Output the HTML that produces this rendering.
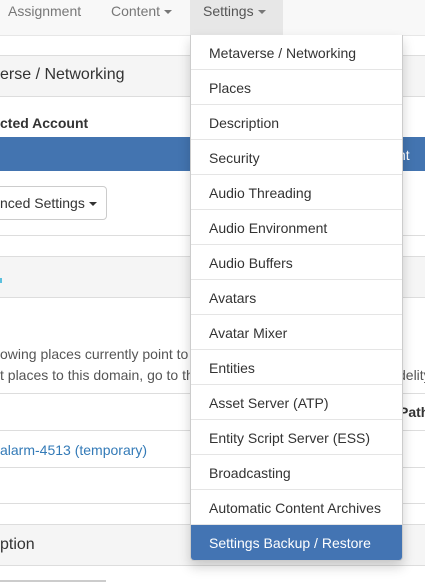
<!DOCTYPE html>
<html><head><style>
*{box-sizing:border-box;margin:0;padding:0}
body{width:425px;height:582px;overflow:hidden;position:relative;background:#fff;font-family:"Liberation Sans",sans-serif;font-size:14px;color:#333}
.a{position:absolute;white-space:nowrap}
.hl{position:absolute;left:0;width:425px;height:1px;background:#ddd}
.caret{display:inline-block;width:0;height:0;border-left:4px solid transparent;border-right:4px solid transparent;border-top:4px solid #777;vertical-align:middle;margin-left:4px}
.dd{position:absolute;left:190px;top:35px;width:213px;height:526px;background:#fff;border:1px solid #ccc;border-top:none;border-radius:0 0 4px 4px;box-shadow:0 6px 12px rgba(0,0,0,.18)}
.it{height:35px;line-height:36px;padding-left:18px;border-bottom:1px solid #e5e5e5;color:#333}
.it.act{background:#4374b3;color:#fff;border-bottom:none;border-radius:0 0 3px 3px}
</style></head><body>
<div class="a" style="left:0;top:0;width:425px;height:36px;background:#f8f8f8;border-bottom:1px solid #e7e7e7"></div>
<div class="a" style="left:190px;top:0;width:93px;height:36px;background:#e7e7e7"></div>
<div class="a" style="left:8px;top:3px;color:#777">Assignment</div>
<div class="a" style="left:111px;top:3px;color:#777">Content<span class="caret"></span></div>
<div class="a" style="left:203px;top:3px;color:#555">Settings<span class="caret"></span></div>

<div class="a" style="left:0;top:55px;width:425px;height:42px;background:#f5f5f5;border-top:1px solid #ddd;border-bottom:1px solid #ddd"></div>
<div class="a" style="left:0;top:66px;font-size:16px">erse / Networking</div>
<div class="a" style="left:0;top:115px;font-weight:bold">cted Account</div>
<div class="a" style="left:0;top:137px;width:425px;height:34px;background:#4374b0"></div>
<div class="a" style="left:398px;top:147px;color:#fff">nt</div>
<div class="a" style="left:-10px;top:186px;width:117px;height:34px;border:1px solid #ccc;border-radius:4px"></div>
<div class="a" style="left:0;top:195px">nced Settings<span class="caret" style="border-top-color:#333"></span></div>
<div class="hl" style="top:235px"></div>
<div class="a" style="left:0;top:256px;width:425px;height:42px;background:#f5f5f5;border-top:1px solid #ddd;border-bottom:1px solid #ddd"></div>
<div class="a" style="left:0;top:278px;width:2px;height:5px;background:#5bc0de"></div>
<div class="a" style="left:0;top:346px;color:#555">owing places currently point to</div>
<div class="a" style="left:0;top:367px;color:#555">t places to this domain, go to th</div>
<div class="a" style="left:398px;top:367px;color:#555">delity</div>
<div class="hl" style="top:393px"></div>
<div class="a" style="left:399px;top:404px;font-weight:bold">Path</div>
<div class="hl" style="top:430px"></div>
<div class="a" style="left:0;top:442px;color:#337ab7">alarm-4513 (temporary)</div>
<div class="hl" style="top:467px"></div>
<div class="hl" style="top:503px"></div>
<div class="a" style="left:0;top:524px;width:425px;height:42px;background:#f5f5f5;border-top:1px solid #ddd;border-bottom:1px solid #ddd"></div>
<div class="a" style="left:0;top:536px;font-size:16px">ption</div>
<div class="a" style="left:0;top:580px;width:106px;height:2px;background:#ccc"></div>

<div class="dd">
<div class="it">Metaverse / Networking</div>
<div class="it">Places</div>
<div class="it">Description</div>
<div class="it">Security</div>
<div class="it">Audio Threading</div>
<div class="it">Audio Environment</div>
<div class="it">Audio Buffers</div>
<div class="it">Avatars</div>
<div class="it">Avatar Mixer</div>
<div class="it">Entities</div>
<div class="it">Asset Server (ATP)</div>
<div class="it">Entity Script Server (ESS)</div>
<div class="it">Broadcasting</div>
<div class="it">Automatic Content Archives</div>
<div class="it act">Settings Backup / Restore</div>
</div>
</body></html>
